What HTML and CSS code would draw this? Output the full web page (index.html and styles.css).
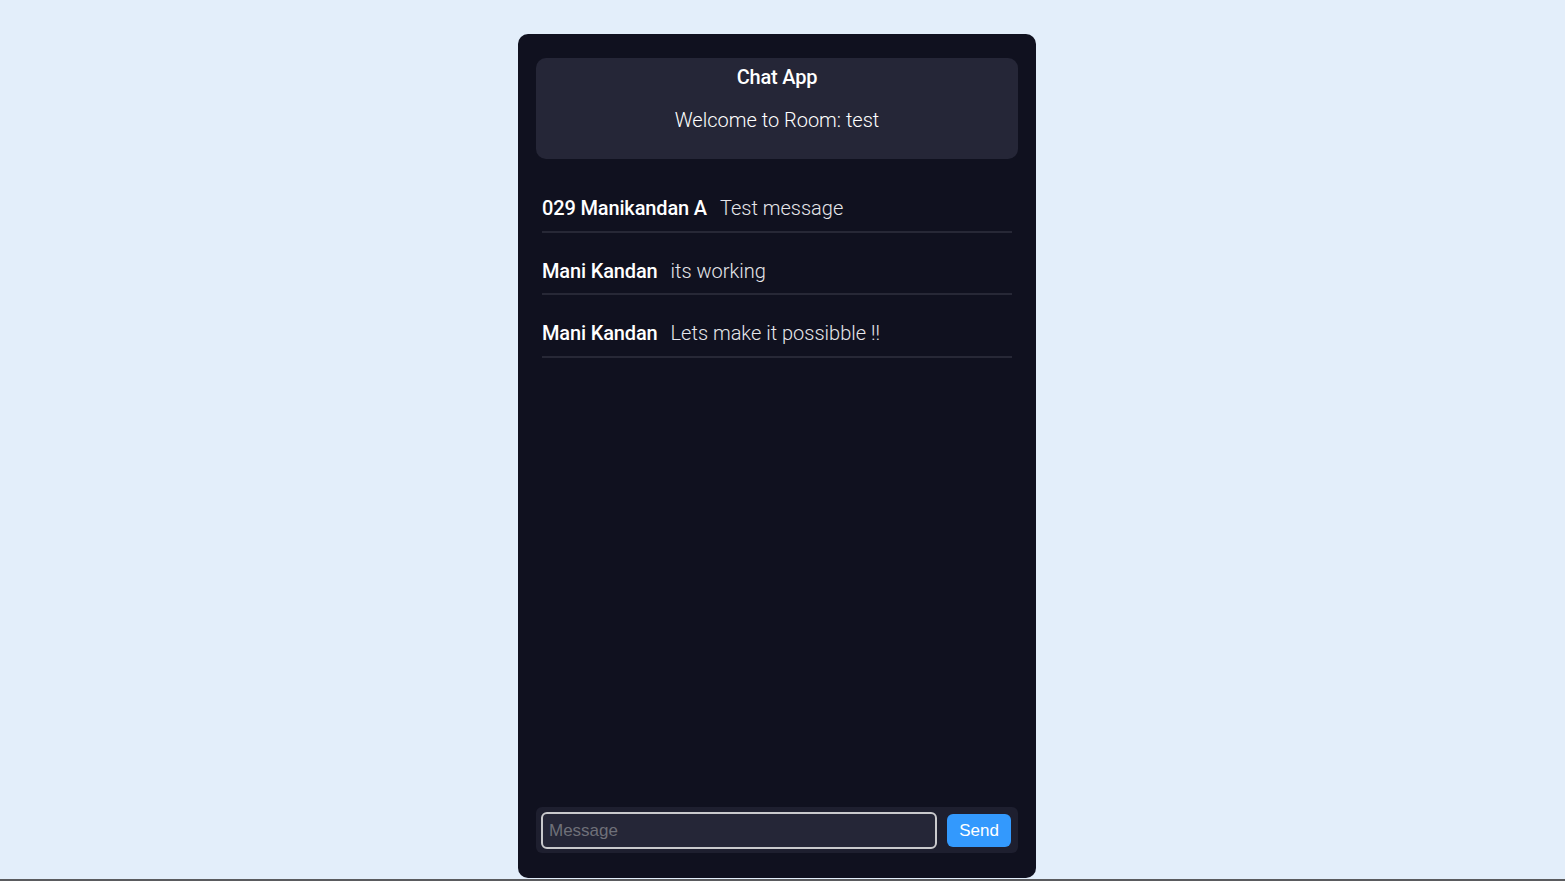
FILE: index.html
```html
<!DOCTYPE html>
<html lang="en">
<head>
<meta charset="utf-8">
<title>Chat App</title>
<link rel="stylesheet" href="styles.css">
</head>
<body>
<div class="page">
  <div class="card">
    <header class="header">
      <h1 class="title">Chat App</h1>
      <p class="room">Welcome to Room: test</p>
    </header>
    <div class="messages">
      <div class="msg"><span class="name">029 Manikandan A</span><span class="text">Test message</span></div>
      <div class="msg"><span class="name">Mani Kandan</span><span class="text">its working</span></div>
      <div class="msg"><span class="name">Mani Kandan</span><span class="text">Lets make it possibble !!</span></div>
    </div>
    <form class="composer">
      <input class="input" type="text" placeholder="Message">
      <button class="send" type="button">Send</button>
    </form>
  </div>
</div>
</body>
</html>
```
FILE: styles.css
```css
html, body {
  margin: 0;
  padding: 0;
}
body {
  background: #e3eefa;
  font-family: Roboto, "Liberation Sans", sans-serif;
}
.page {
  height: 881px;
  box-sizing: border-box;
  padding-top: 34px;
  padding-right: 11px;
  border-bottom: 2px solid #5a5b5e;
  display: flex;
  justify-content: center;
}
.card {
  width: 518px;
  height: 844px;
  box-sizing: border-box;
  background: #10111f;
  border-radius: 10px;
  padding: 24px 18px 25px;
  display: flex;
  flex-direction: column;
}
.header {
  background: #252637;
  border-radius: 10px;
  padding: 7px 0 27px;
  text-align: center;
  color: #fff;
}
.title {
  margin: 0;
  font-size: 20px;
  font-weight: 500;
  line-height: normal;
  letter-spacing: -0.2px;
}
.room {
  margin: 19px 0 0;
  font-size: 20px;
  font-weight: 300;
  line-height: normal;
}
.messages {
  flex: 1;
  margin: 11px 6px 0;
}
.msg {
  padding: 26px 0 10.5px;
  border-bottom: 2px solid #272836;
  font-size: 20px;
  line-height: normal;
  display: flex;
  gap: 13px;
}
.name {
  color: #fff;
  font-weight: 500;
  letter-spacing: -0.15px;
}
.text {
  color: #e6e6ea;
  font-weight: 300;
}
.composer {
  margin: 0;
  background: #1e1f2f;
  border-radius: 6px;
  padding: 5px 7px 4px 5px;
  display: flex;
  align-items: flex-start;
  gap: 10px;
}
.input {
  flex: 1;
  height: 37px;
  box-sizing: border-box;
  margin: 0;
  background: #252637;
  border: 2px solid #c9c9cc;
  border-radius: 6px;
  padding: 0 6px;
  color: #fff;
  font-family: "Liberation Sans", Arial, sans-serif;
  font-size: 17px;
  outline: none;
}
.input::placeholder {
  color: #6f7079;
}
.send {
  margin-top: 2px;
  width: 64px;
  height: 33px;
  border: none;
  border-radius: 6px;
  background: #3399fd;
  color: #fff;
  font-family: "Liberation Sans", Arial, sans-serif;
  font-size: 17px;
  padding: 0;
}
```
